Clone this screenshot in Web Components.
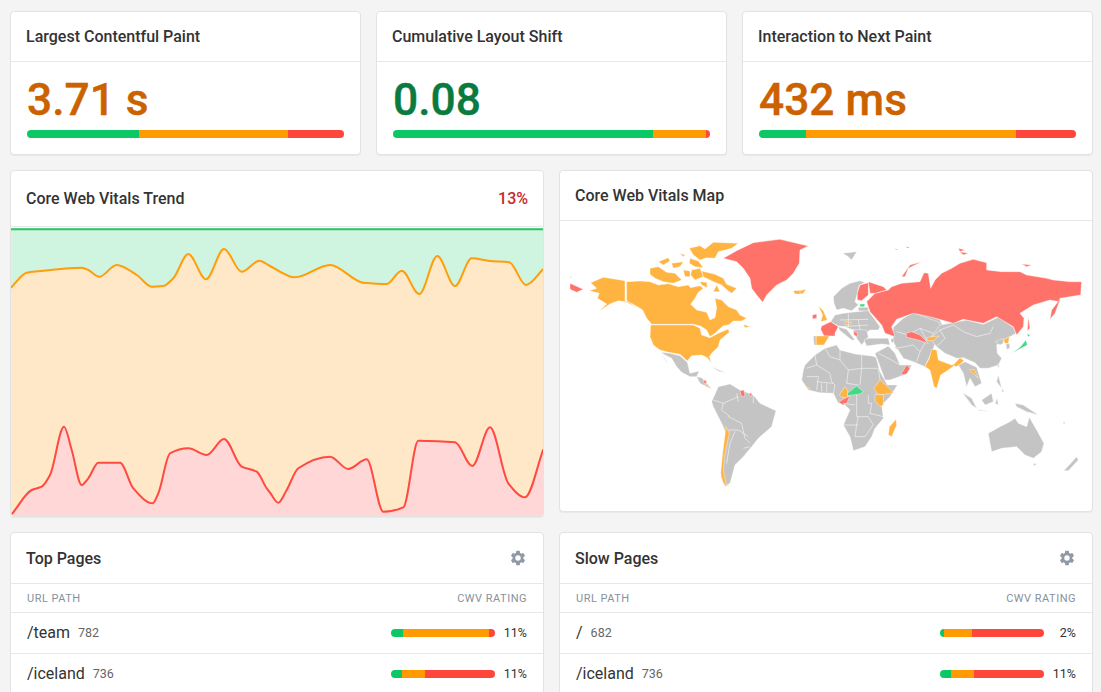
<!doctype html>
<html><head><meta charset="utf-8"><style>
html,body{margin:0;height:692px;overflow:hidden;background:#f4f4f4}
body{font-family:Roboto,"Liberation Sans",sans-serif;color:#333}
</style></head><body>
<cwv-dashboard>
  <cwv-metric title="Largest Contentful Paint" value="3.71 s" color="#cc6100" g="35.3" o="47" r="17.7"></cwv-metric>
  <cwv-metric title="Cumulative Layout Shift" value="0.08" color="#0a7a3e" g="82" o="16.7" r="1.3"></cwv-metric>
  <cwv-metric title="Interaction to Next Paint" value="432 ms" color="#cc6100" g="14.8" o="66.2" r="19"></cwv-metric>
  <cwv-trend slot="left"></cwv-trend>
  <cwv-map slot="right"></cwv-map>
  <cwv-table slot="left2" title="Top Pages">
    <cwv-row path="/team" count="782" pct="11%" g="11.5" o="82.7" r="5.8"></cwv-row>
    <cwv-row path="/iceland" count="736" pct="11%" g="10.5" o="22" r="67.5"></cwv-row>
  </cwv-table>
  <cwv-table slot="right2" title="Slow Pages">
    <cwv-row path="/" count="682" pct="2%" g="3.8" o="27" r="69.2"></cwv-row>
    <cwv-row path="/iceland" count="736" pct="11%" g="10.5" o="22" r="67.5"></cwv-row>
  </cwv-table>
</cwv-dashboard>
<script>
const def=(n,c)=>customElements.define(n,c);
class Shadow extends HTMLElement{
  constructor(){super();this.attachShadow({mode:'open'});}
  a(n){return this.getAttribute(n)||'';}
}
def('cwv-dashboard',class extends Shadow{connectedCallback(){this.shadowRoot.innerHTML=`<style>
:host{display:grid;gap:15px;padding:11px 8px 0 10px;width:1083px}
.r3{display:grid;grid-template-columns:repeat(3,351px);gap:15px}
.r2{display:grid;grid-template-columns:repeat(2,534px);gap:15px;align-items:start}
</style>
<div class="r3"><slot></slot></div>
<div class="r2"><slot name="left"></slot><slot name="right"></slot></div>
<div class="r2"><slot name="left2"></slot><slot name="right2"></slot></div>`;}});

def('cwv-card',class extends Shadow{connectedCallback(){this.shadowRoot.innerHTML=`<style>
:host{display:block;background:#fff;border:1px solid #e3e3e3;border-radius:4px;box-shadow:0 1px 1px rgba(0,0,0,.05);overflow:hidden;box-sizing:border-box}
header{display:flex;align-items:center;justify-content:space-between;padding:var(--pt,0) 15px 0;height:var(--head,49px);border-bottom:1px solid #e8e8e8;font:500 16px/20px Roboto,sans-serif;color:#333;box-sizing:content-box}
</style><header><slot name="title"></slot><slot name="action"></slot></header><slot></slot>`;}});

def('cwv-bar',class extends Shadow{connectedCallback(){this.shadowRoot.innerHTML=`<style>
:host{display:flex;height:8px;border-radius:4px;overflow:hidden}
i{display:block;height:100%}
</style><i style="width:${this.a('g')}%;background:#0cc864"></i><i style="width:${this.a('o')}%;background:#ff9b00"></i><i style="width:${this.a('r')}%;background:#ff463b"></i>`;}});

def('cwv-metric',class extends Shadow{connectedCallback(){this.shadowRoot.innerHTML=`<style>
:host{display:block}
.b{padding:12px 16px 16px}
.v{font:500 44.3px/52px Roboto,sans-serif;height:56px;color:${this.a('color')};-webkit-text-stroke:.4px currentColor}
</style><cwv-card><span slot="title">${this.a('title')}</span>
<div class="b"><div class="v">${this.a('value')}</div><cwv-bar g="${this.a('g')}" o="${this.a('o')}" r="${this.a('r')}"></cwv-bar></div></cwv-card>`;}});

function smooth(p){
  const n=p.length,d=[],m=[];
  for(let i=0;i<n-1;i++)d[i]=(p[i+1][1]-p[i][1])/(p[i+1][0]-p[i][0]);
  m[0]=d[0];m[n-1]=d[n-2];
  for(let i=1;i<n-1;i++){
    if(d[i-1]*d[i]<=0)m[i]=0;
    else{const h0=p[i][0]-p[i-1][0],h1=p[i+1][0]-p[i][0];m[i]=3*(h0+h1)/((2*h1+h0)/d[i-1]+(h1+2*h0)/d[i]);}
  }
  let s=`M${p[0][0].toFixed(1)} ${p[0][1].toFixed(1)}`;
  for(let i=0;i<n-1;i++){
    const h=(p[i+1][0]-p[i][0])/3;
    s+=`C${(p[i][0]+h).toFixed(1)} ${(p[i][1]+m[i]*h).toFixed(1)} ${(p[i+1][0]-h).toFixed(1)} ${(p[i+1][1]-m[i+1]*h).toFixed(1)} ${p[i+1][0].toFixed(1)} ${p[i+1][1].toFixed(1)}`;
  }
  return s;
}
const conv=(a,b)=>[...a.map(([x,y])=>[x/3,y/3+220]),...b.map(([x,y])=>[x/3+270,y/3+220])];
const ORANGE=conv([[33,203],[80,158],[130,152],[245,143],[265,150],[298,170],[350,135],[410,165],[455,200],[490,198],[520,175],[565,102],[618,178],[672,87],[725,155],[778,122]],
 [[0,138],[75,172],[180,135],[280,188],[350,192],[395,152],[448,222],[502,108],[555,198],[605,115],[660,123],[718,127],[768,195],[820,147]]);
const RED=conv([[36,882],[95,810],[125,800],[150,765],[192,620],[215,690],[245,795],[265,775],[295,728],[360,728],[400,805],[458,850],[475,820],[510,700],[565,685],[620,705],[672,657],[725,740],[770,755],[800,805]],
 [[0,818],[25,848],[50,810],[85,745],[180,710],[235,747],[290,718],[340,875],[400,862],[445,662],[555,667],[607,738],[660,622],[715,790],[765,832],[820,688]]);

def('cwv-trend',class extends Shadow{connectedCallback(){
  const o=smooth(ORANGE),r=smooth(RED);
  this.shadowRoot.innerHTML=`<style>
:host{display:block;--head:55px}
.t{color:#c62828;font-weight:500}
.w{padding-top:1px}
svg{display:block;width:532px;height:288px}
</style><cwv-card><span slot="title">Core Web Vitals Trend</span><span slot="action" class="t">13%</span>
<div class="w"><svg viewBox="11 228 532 288">
<rect x="11" y="228" width="532" height="288" fill="#ffe8c8"/>
<path d="${o}L543 229 11 229Z" fill="#cff5e1"/>
<path d="${r}L543 517 11 517Z" fill="#ffd7d7"/>
<path d="M11 229.3H543" stroke="#22c768" stroke-width="2" fill="none"/>
<path d="${o}" stroke="#ff9d0a" stroke-width="2" fill="none"/>
<path d="${r}" stroke="#ff4a40" stroke-width="2" fill="none"/>
</svg></div></cwv-card>`;}});

const O='#ffb340',R='#ff7269',G='#c4c4c4',N='#45d985';
const AM=[
[O,'92,158 130,142 195,152 195,213 210,218 232,232 195,215 175,212 150,222 118,243 140,222 112,205 118,190 88,182 110,175'],
[R,'490,85 530,62 580,38 660,28 745,48 720,60 718,100 700,130 680,150 650,165 620,195 608,217 590,195 575,175 570,145 550,115 530,95'],
[O,'700,182 738,180 725,192 705,192'],[R,'30,160 70,178 50,187 30,178'],[R,'30,140 36,141 32,143'],
[G,'475,470 510,462 540,480 580,495 600,520 648,542 635,590 595,625 575,650 550,680 525,705 510,760 495,770 482,740 490,680 500,620 490,590 460,530 455,515'],
[O,'498,590 508,610 495,670 490,720 498,760 510,770 490,760 482,730 488,670'],
[R,'540,482 552,480 555,498 545,500'],[R,'568,490 575,490 575,498 568,498']
];
const AML=['460,510 490,520 485,540 510,560','490,520 535,500','505,560 545,580 555,625 570,640','505,600 535,600 565,620','525,605 510,640 500,700','550,655 570,650','580,495 580,520','530,490 535,515'];
const NA=[
[O,'80,140 120,138 150,140 175,150 205,146 235,155 265,150 272,158 300,152 310,160 295,172 285,190 272,208 290,225 320,232 330,255 345,248 350,220 345,190 365,195 385,215 410,225 420,240 440,250 425,258 400,258 385,270 370,272 345,295 330,305 320,285 300,272 280,268 155,268 140,250 128,225 100,208 80,198'],
[O,'150,100 175,95 200,112 225,115 245,135 220,145 190,140 165,130 150,118'],[O,'175,80 205,68 210,78 190,90'],[O,'250,105 270,108 270,125 255,125'],[O,'275,105 300,100 310,125 285,135 272,120'],
[O,'305,108 345,118 370,130 380,148 410,160 395,175 385,168 365,150 340,140 310,125'],[O,'268,40 300,32 315,42 340,22 415,25 395,40 355,50 345,70 320,68 300,75 280,60'],[O,'240,55 255,60 250,65'],[O,'270,70 295,78 310,98 285,95 268,85'],[O,'215,85 250,80 240,95 220,100'],[O,'350,150 360,170 340,170'],[O,'430,268 450,275 435,278'],[O,'300,140 320,142 322,158 305,150'],
[O,'152,270 280,270 300,280 305,300 330,308 355,295 385,282 388,292 360,315 355,335 335,355 328,365 335,385 322,368 305,360 275,362 262,378 240,358 205,352 180,345 160,330 150,305'],
[G,'182,352 210,355 240,362 262,382 270,415 298,408 290,425 270,425 245,412 230,395 215,370 195,360'],[G,'185,355 205,388 195,375'],
[G,'290,425 305,428 325,450 335,462 320,455 300,445'],[R,'312,435 320,438 318,446 310,442'],[O,'315,448 325,455 318,456'],[G,'335,395 380,415 355,408']
];
const EU=[
[G,'10,300 15,285 45,255 75,235 110,225 120,240 165,252 215,258 228,262 240,305 262,345 292,345 270,380 245,405 250,445 225,475 215,500 195,530 160,542 150,500 130,465 150,420 130,400 115,400 100,370 60,368 25,360 5,330'],
[O,'118,375 135,350 143,362 142,382 125,382'],[N,'142,370 170,348 190,365 180,372 145,377'],[R,'118,395 135,385 150,378 140,400 130,405 120,400'],
[O,'222,355 240,330 262,350 280,368 250,374 232,372'],[O,'225,374 250,374 250,405 240,410 225,392'],[O,'288,448 290,465 275,500 265,495 268,470'],
[O,'22,352 30,355 25,360'],[O,'0,62 18,58 10,70 0,72'],
[G,'100,80 125,55 150,40 180,32 195,38 178,45 172,70 165,95 175,105 155,122 130,115 110,120 102,100'],[R,'172,70 180,45 205,38 205,75 185,92 172,90'],[N,'180,102 195,102 193,110 180,110'],[G,'175,112 205,112 205,125 175,122'],
[O,'55,108 70,122 82,150 62,155 68,135'],[R,'37,135 50,132 50,145 38,147'],
[G,'105,135 130,130 170,125 205,122 240,170 235,180 210,180 190,195 175,205 160,180 135,170 115,168 92,155'],
[R,'65,168 92,155 115,170 105,190 105,198 72,198 62,178'],[O,'48,198 88,198 72,225 48,225'],[G,'40,198 48,198 48,225 42,225'],
[G,'115,170 140,178 165,210 155,210 130,190 118,180'],[G,'160,178 200,180 205,200 185,225 170,205'],[R,'160,182 172,190 172,200 162,195'],[O,'135,155 155,158 150,165 135,163'],
[G,'192,210 205,205 265,205 270,225 245,222 200,228'],[G,'272,208 290,200 290,215 275,218'],
[G,'290,215 340,205 375,220 385,260 375,275 340,270 310,250 285,235'],[G,'225,250 265,228 285,250 300,285 335,285 320,312 270,330 255,330 235,275'],[R,'302,315 320,285 330,295 320,312'],
[G,'285,170 310,150 370,130 420,150 430,170 385,205 340,205 305,195 300,175'],[G,'340,205 385,205 400,225 385,260 375,220']
];
const EUL=['45,255 50,285 20,295','50,285 90,310 95,335','75,235 90,260 120,270 120,240','120,270 145,300 140,340','185,255 185,295 235,295','185,295 180,345','145,300 185,295','50,335 100,340','20,320 55,320','55,320 50,360','95,335 105,345 100,370','80,340 80,365','65,340 65,365','140,340 175,345','235,295 240,330','215,400 210,430 250,440','130,400 165,405','170,375 170,440 205,440','130,465 175,465','175,440 170,465 165,500 195,500','205,440 220,465 195,500','205,375 205,400 215,400','120,150 205,148','145,130 145,170','175,150 180,180','130,170 205,165','265,228 285,235 310,250','300,285 265,265 235,250'];
const RU=[
[R,'140,215 165,190 205,180 215,170 245,160 300,155 312,128 325,130 332,175 345,150 365,130 395,115 420,100 460,88 500,98 500,120 545,125 600,125 620,135 680,145 700,150 750,155 785,155 782,195 720,205 718,215 690,210 640,225 600,250 612,265 610,290 590,315 580,290 530,260 490,280 430,268 400,280 330,260 280,250 230,268 215,290 225,320 195,310 185,285 150,245'],
[R,'145,155 190,170 200,180 165,190 150,190'],[R,'690,268 695,240 722,205 705,250'],[R,'245,140 270,105 305,95 265,115 255,140'],[R,'415,55 435,60 420,65'],[R,'420,65 445,70 430,75'],[R,'605,102 635,105 620,110'],[R,'225,56 235,58 228,60'],[R,'258,50 270,52 262,55'],
[G,'68,70 110,65 95,90 85,80'],[R,'730,575 735,578 732,582'],
[R,'258,310 275,305 300,315 325,340 295,330 260,322'],[O,'320,322 358,318 340,332 322,332'],
[G,'505,610 540,590 570,575 585,565 595,580 620,590 628,562 650,600 672,640 665,665 640,685 615,675 590,650 545,655 515,665 510,640'],[G,'732,722 770,680 775,690 745,722'],[G,'640,700 650,702 642,708']
];
const AS=[
[G,'-80,112 -50,85 -20,68 60,98 60,120 40,175 15,230 -20,215 -50,205 -78,160 -82,130'],
[G,'60,105 90,100 140,90 190,103 235,82 280,112 288,130 262,145 230,165 232,190 245,205 235,225 205,235 180,235 165,218 130,203 110,205 75,190 50,170 30,145'],
[O,'35,178 50,180 55,210 95,225 110,218 98,230 85,240 62,255 50,295 42,290 30,240 15,230 28,205'],[O,'100,225 120,203 132,212 118,225 108,230'],
[G,'115,225 135,215 170,232 185,280 165,290 150,265 140,290 130,250'],[O,'148,240 162,238 175,265 160,250'],
[G,'225,155 250,145 250,160 240,165'],[O,'250,150 268,140 265,160 255,160'],[G,'258,162 268,160 270,175 260,178'],
[N,'275,190 300,172 318,150 322,165 298,178'],[N,'320,132 332,135 325,140'],[R,'325,80 330,115 322,122'],
[G,'128,308 155,325 170,355 155,345'],[G,'170,358 210,365 180,362'],[G,'185,330 215,310 220,335 195,345'],[G,'225,340 235,345 232,325'],[G,'235,255 245,295 230,275'],[G,'248,295 252,305 245,305'],[G,'285,340 310,345 355,375 320,365 290,350'],[G,'232,225 238,225 235,235']
];
const ASL=['60,120 100,105 130,125 170,140 210,130 220,110','50,170 75,145 60,120','30,145 60,120','-70,175 -20,165 0,185 -10,215','-70,125 -35,135 0,115 40,130','0,115 20,150 0,185'];
const poly=(a)=>a.map(([c,p])=>`<polygon fill="${c}" points="${p}"/>`).join('');
const lines=(a)=>a.map(p=>`<polyline points="${p}"/>`).join('');
const layer=(x,y,a,l=[])=>`<g transform="translate(${x} ${y}) scale(.3333)">${poly(a)}<g class="l">${lines(l)}</g></g>`;
def('cwv-map',class extends Shadow{connectedCallback(){this.shadowRoot.innerHTML=`<style>
:host{display:block}
svg{display:block;width:532px;height:290px}
polygon{stroke:#fff;stroke-width:1.2;stroke-linejoin:round}
.l{fill:none;stroke:#fff;stroke-width:1.6}
</style><cwv-card><span slot="title">Core Web Vitals Map</span>
<svg viewBox="560 221 532 290">
${layer(560,230,AM,AML)}${layer(600,235,NA)}${layer(800,270,EU,EUL)}${layer(920,290,AS,ASL)}${layer(820,230,RU)}
</svg></cwv-card>`;}});

def('cwv-table',class extends Shadow{connectedCallback(){this.shadowRoot.innerHTML=`<style>
:host{display:block;--head:49px;--pt:1px}
svg{width:18px;height:18px;fill:#8f9aa6;display:block;margin-right:1px;position:relative;top:-1px}
.h{display:flex;justify-content:space-between;padding:1px 16px 0;height:27px;align-items:center;border-bottom:1px solid #e8e8e8;font:400 11px/14px Roboto,sans-serif;letter-spacing:.5px;color:#87919c}
</style><cwv-card><span slot="title">${this.a('title')}</span>
<svg slot="action" viewBox="0 0 24 24"><path d="M19.14 12.94c.04-.3.06-.61.06-.94s-.02-.64-.07-.94l2.03-1.58a.49.49 0 0 0 .12-.61l-1.92-3.32a.49.49 0 0 0-.59-.22l-2.39.96a7 7 0 0 0-1.62-.94l-.36-2.54a.48.48 0 0 0-.48-.41h-3.84a.48.48 0 0 0-.47.41l-.36 2.54c-.59.24-1.13.57-1.62.94l-2.39-.96a.48.48 0 0 0-.59.22L2.74 8.87a.48.48 0 0 0 .12.61l2.03 1.58c-.05.3-.09.63-.09.94s.02.64.07.94l-2.03 1.58a.49.49 0 0 0-.12.61l1.92 3.32c.12.22.37.29.59.22l2.39-.96c.5.38 1.03.7 1.62.94l.36 2.54c.05.24.24.41.48.41h3.84c.24 0 .44-.17.47-.41l.36-2.54a7 7 0 0 0 1.62-.94l2.39.96c.22.08.47 0 .59-.22l1.92-3.32a.47.47 0 0 0-.12-.61zM12 15.6A3.6 3.6 0 1 1 12 8.4a3.6 3.6 0 0 1 0 7.2z"/></svg>
<div class="h"><span>URL PATH</span><span>CWV RATING</span></div><slot></slot></cwv-card>`;}});

def('cwv-row',class extends Shadow{connectedCallback(){this.shadowRoot.innerHTML=`<style>
:host{display:flex;align-items:center;padding:0 16px;height:40px;border-bottom:1px solid #e8e8e8;font:400 16px/20px Roboto,sans-serif;color:#333}
.c{font-size:12.5px;color:#666;margin-left:8px;flex:1}
cwv-bar{width:104px}
.p{width:32px;text-align:right;font-size:12.5px}
</style><span>${this.a('path')}</span><span class="c">${this.a('count')}</span><cwv-bar g="${this.a('g')}" o="${this.a('o')}" r="${this.a('r')}"></cwv-bar><span class="p">${this.a('pct')}</span>`;}});
</script></body></html>
